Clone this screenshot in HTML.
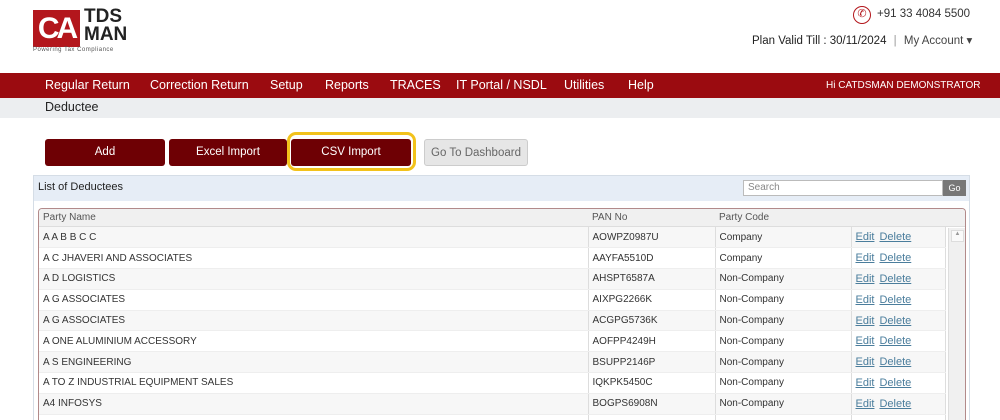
<!DOCTYPE html>
<html><head><style>
*{margin:0;padding:0;box-sizing:border-box}
body{width:1000px;height:420px;overflow:hidden;background:#fff;font-family:"Liberation Sans",sans-serif;position:relative}
.abs{position:absolute}
.nav{left:0;top:73px;width:1000px;height:25px;background:#9b0b10;color:#fff;font-size:12.5px}
.nav span{position:absolute;top:5px}
.sub{left:0;top:98px;width:1000px;height:20px;background:#eceef0;font-size:12.5px;color:#222}
.btn{top:139px;height:27px;background:#6e0004;color:#fff;font-size:11.5px;text-align:center;line-height:27px;border-radius:3px}
table{border-collapse:collapse;font-size:10px;color:#333;width:100%}
td{height:20.8px;padding-left:4px;border-right:1px solid #ddd;border-bottom:1px solid #eee}
tr:nth-child(odd) td{background:#f7f7f7}
a{color:#4a7d9c;text-decoration:underline;margin-right:5px;font-size:11px}
</style></head><body>
<div class="abs" style="left:33px;top:10px;width:47px;height:37px;background:#b3161c;color:#fff;font-size:30px;font-weight:bold;line-height:37px;text-align:center;letter-spacing:-3px">CA</div>
<div class="abs" style="left:84px;top:8px;font-size:19px;font-weight:bold;line-height:18px;color:#222">TDS<br>MAN</div>
<div class="abs" style="left:33px;top:47px;font-size:6px;color:#555;letter-spacing:0.5px">Powering Tax Compliance</div>
<div class="abs" style="left:853px;top:6px;width:18px;height:18px;border:1.5px solid #b3161c;border-radius:50%;color:#b3161c;font-size:11px;text-align:center;line-height:15px">✆</div>
<div class="abs" style="left:877px;top:8px;font-size:11.5px;color:#333">+91 33 4084 5500</div>
<div class="abs" style="left:752px;top:33px;font-size:11.5px;color:#222;white-space:nowrap">Plan Valid Till : 30/11/2024 <span style="color:#999;margin:0 4px">|</span> <span style="color:#444">My Account ▾</span></div>
<div class="abs nav"><span style="left:45px">Regular Return</span><span style="left:150px">Correction Return</span><span style="left:270px">Setup</span><span style="left:325px">Reports</span><span style="left:390px">TRACES</span><span style="left:456px">IT Portal / NSDL</span><span style="left:564px">Utilities</span><span style="left:628px">Help</span><span style="left:826px;top:7px;font-size:10px">Hi CATDSMAN DEMONSTRATOR</span></div>
<div class="abs sub"><span style="position:absolute;left:45px;top:2px">Deductee</span></div>
<div class="abs btn" style="left:45px;width:120px">Add</div>
<div class="abs btn" style="left:169px;width:118px">Excel Import</div>
<div class="abs" style="left:287px;top:132px;width:129px;height:39px;border:3px solid #f2c21b;border-radius:9px"></div>
<div class="abs btn" style="left:291px;width:120px">CSV Import</div>
<div class="abs btn" style="left:424px;width:104px;background:#e6e6e6;color:#666;border:1px solid #ccc">Go To Dashboard</div>
<div class="abs" style="left:33px;top:175px;width:937px;height:245px;border:1px solid #d5dde6;border-bottom:none"></div>
<div class="abs" style="left:34px;top:176px;width:935px;height:25px;background:#e6edf6"></div>
<div class="abs" style="left:38px;top:181px;font-size:11px;color:#222">List of Deductees</div>
<div class="abs" style="left:743px;top:180px;width:200px;height:16px;border:1px solid #bbb;background:#fff;font-size:10px;color:#888;padding:1px 4px">Search</div>
<div class="abs" style="left:943px;top:180px;width:23px;height:16px;background:#777;color:#fff;font-size:9px;text-align:center;line-height:16px">Go</div>
<div class="abs" style="left:38px;top:208px;width:928px;height:212px;border:1px solid #b28a8a;border-bottom:none;border-radius:4px 4px 0 0;overflow:hidden">
<div style="height:18px;background:#f0f0f0;font-size:10px;color:#555;position:relative;border-bottom:1px solid #ddd"><span style="position:absolute;left:4px;top:3px">Party Name</span><span style="position:absolute;left:553px;top:3px">PAN No</span><span style="position:absolute;left:680px;top:3px">Party Code</span></div>
<div style="width:907px"><table>
<colgroup><col style="width:549px"><col style="width:127px"><col style="width:136px"><col></colgroup>
<tr><td>A A B B C C</td><td>AOWPZ0987U</td><td>Company</td><td><a>Edit</a><a>Delete</a></td></tr>
<tr><td>A C JHAVERI AND ASSOCIATES</td><td>AAYFA5510D</td><td>Company</td><td><a>Edit</a><a>Delete</a></td></tr>
<tr><td>A D LOGISTICS</td><td>AHSPT6587A</td><td>Non-Company</td><td><a>Edit</a><a>Delete</a></td></tr>
<tr><td>A G ASSOCIATES</td><td>AIXPG2266K</td><td>Non-Company</td><td><a>Edit</a><a>Delete</a></td></tr>
<tr><td>A G ASSOCIATES</td><td>ACGPG5736K</td><td>Non-Company</td><td><a>Edit</a><a>Delete</a></td></tr>
<tr><td>A ONE ALUMINIUM ACCESSORY</td><td>AOFPP4249H</td><td>Non-Company</td><td><a>Edit</a><a>Delete</a></td></tr>
<tr><td>A S ENGINEERING</td><td>BSUPP2146P</td><td>Non-Company</td><td><a>Edit</a><a>Delete</a></td></tr>
<tr><td>A TO Z INDUSTRIAL EQUIPMENT SALES</td><td>IQKPK5450C</td><td>Non-Company</td><td><a>Edit</a><a>Delete</a></td></tr>
<tr><td>A4 INFOSYS</td><td>BOGPS6908N</td><td>Non-Company</td><td><a>Edit</a><a>Delete</a></td></tr>
<tr><td>&nbsp;</td><td></td><td></td><td></td></tr>
</table></div>
<div style="position:absolute;left:909px;top:19px;width:18px;height:200px;background:#f0f0f0;border-left:1px solid #ddd"><div style="margin:2px;height:12px;background:#fafafa;border:1px solid #ddd;font-size:6px;color:#999;text-align:center">▲</div></div>
</div>
</body></html>
